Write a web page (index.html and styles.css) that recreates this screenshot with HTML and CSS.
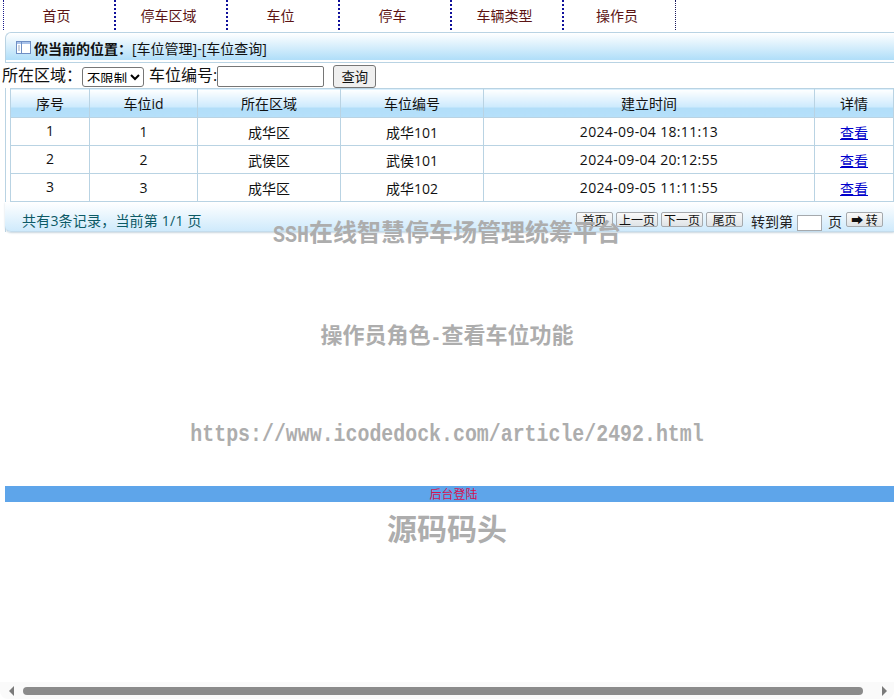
FILE: index.html
```html
<!DOCTYPE html>
<html lang="zh-CN">
<head>
<meta charset="utf-8">
<title>车位查询</title>
<link rel="stylesheet" href="styles.css">
</head>
<body>
<nav class="nav">
  <a class="nav-item">首页</a>
  <a class="nav-item">停车区域</a>
  <a class="nav-item">车位</a>
  <a class="nav-item">停车</a>
  <a class="nav-item">车辆类型</a>
  <a class="nav-item nav-last">操作员</a>
</nav>
<header class="crumb">
  <svg class="crumb-icon" width="15" height="13" viewBox="0 0 15 13"><rect x="0.5" y="0.5" width="14" height="12" fill="#fff" stroke="#6f8fc4"/><rect x="1" y="1" width="13" height="2" fill="#a9c3ea"/><path d="M5.5 1v11" stroke="#6f8fc4"/><path d="M2 5h2M2 7h2M2 9h2" stroke="#9aa9c0"/></svg>
  <b class="crumb-title">你当前的位置：</b><span>[车位管理]-[车位查询]</span>
</header>
<form class="filter">
  <label class="filter-label">所在区域：</label>
  <select class="filter-select"><option>不限制</option></select>
  <label class="filter-label code-label">车位编号:</label>
  <input class="filter-input" type="text">
  <button class="filter-btn" type="button">查询</button>
</form>
<section class="list">
  <table class="grid">
    <colgroup><col class="c1"><col class="c2"><col class="c3"><col class="c4"><col class="c5"><col class="c6"></colgroup>
    <thead>
      <tr><th>序号</th><th>车位id</th><th>所在区域</th><th>车位编号</th><th>建立时间</th><th>详情</th></tr>
    </thead>
    <tbody>
      <tr><td><span class="num">1</span></td><td>1</td><td>成华区</td><td>成华101</td><td class="time">2024-09-04 18:11:13</td><td><a href="#">查看</a></td></tr>
      <tr><td><span class="num">2</span></td><td>2</td><td>武侯区</td><td>武侯101</td><td class="time">2024-09-04 20:12:55</td><td><a href="#">查看</a></td></tr>
      <tr><td><span class="num">3</span></td><td>3</td><td>成华区</td><td>成华102</td><td class="time">2024-09-05 11:11:55</td><td><a href="#">查看</a></td></tr>
    </tbody>
  </table>
  <footer class="pager">
    <span class="pager-info">共有3条记录，当前第 1/1 页</span>
    <span class="pager-btns">
      <button class="pg" type="button">首页</button>
      <button class="pg wide" type="button">上一页</button>
      <button class="pg wide" type="button">下一页</button>
      <button class="pg" type="button">尾页</button>
    </span>
    <span class="goto">转到第</span>
    <input class="pg-input" type="text">
    <span class="goto-end">页</span>
    <button class="pg go" type="button">➡ 转</button>
  </footer>
</section>
<div class="band"><a class="band-link">后台登陆</a></div>

<div class="mark mark1"><span class="lat">SSH</span>在线智慧停车场管理统筹平台</div>
<div class="mark mark2">操作员角色<span class="lat">-</span>查看车位功能</div>
<div class="mark mark3"><span class="lat">https://www.icodedock.com/article/2492.html</span></div>
<div class="mark mark4">源码码头</div>

<div class="hscroll">
  <span class="arrow arrow-l"></span>
  <span class="thumb"></span>
  <span class="arrow arrow-r"></span>
</div>
</body>
</html>
```
FILE: styles.css
```css
* { box-sizing: border-box; }
html, body { margin: 0; height: 699px; overflow: hidden; background: #fff; }
body {
  position: relative;
  width: 894px;
  font-family: "Open Sans", "Noto Sans CJK SC", sans-serif;
  font-size: 14px;
  color: #111;
}

.nav {
  display: flex;
  height: 30px;
  margin-left: 3px;
  border-left: 1px dotted #1a1a8c;
}
.nav-item {
  width: 112px;
  padding-right: 5px;
  line-height: 31px;
  text-align: center;
  font-size: 14px;
  color: #5c1414;
  border-right: 2px dotted #10109a;
}
.nav-last { border-right: 1px dotted #1a1a5c; }

.crumb {
  display: flex;
  align-items: center;
  height: 31px;
  margin: 2px 0 0 5px;
  padding: 0 0 0 10px;
  font-size: 14px;
  background: linear-gradient(#fff, #b2dff9 90%);
  border-top: 1px solid #b9d3e3;
  border-left: 1px solid #b9d3e3;
  border-bottom: 1px solid #b9d3e3;
  border-top-left-radius: 6px;
  box-shadow: inset 0 -2px 0 #fff;
}
.crumb-icon { margin-right: 3px; }
.crumb-title { font-size: 14px; color: #111; }

.filter {
  display: flex;
  align-items: center;
  height: 25px;
  padding-left: 2px;
  font-size: 16px;
}
.filter-label { white-space: nowrap; line-height: 27px; }
.filter-select {
  width: 62px;
  height: 20px;
  margin-top: 2px;
  padding: 0 0 3px;
  font: 13.33px/14px "Noto Sans CJK SC", sans-serif;
  background: #fff;
  border: 1px solid #767676;
  border-radius: 3px;
}
.code-label { margin-left: 5px; }
.filter-input {
  width: 107px;
  height: 21px;
  margin-top: 2px;
  padding: 0 2px;
  background: #fff;
  border: 1px solid #767676;
  border-radius: 2px;
}
.filter-btn {
  width: 43px;
  height: 23px;
  margin: 1px 0 0 9px;
  padding: 0;
  font: 13.33px "Noto Sans CJK SC", sans-serif;
  color: #111;
  background: #efefef;
  border: 1px solid #767676;
  border-radius: 3px;
}

.list {
  margin-left: 5px;
  padding-left: 5px;
  border-left: 1px solid #b9d3e3;
}
.grid {
  width: 883px;
  table-layout: fixed;
  border-collapse: collapse;
  margin-left: -1px;
}
.c1 { width: 79px; }
.c2 { width: 108px; }
.c3 { width: 143px; }
.c4 { width: 143px; }
.c5 { width: 331px; }
.c6 { width: 79px; }
.grid th, .grid td {
  border: 1px solid #b9d3e3;
  text-align: center;
  padding: 0;
}
.grid th {
  height: 29px;
  font-weight: 400;
  font-size: 14px;
  background: linear-gradient(#fff 0, #cbe9fd 65%, #b2def9 66%, #b6e0fa 100%);
}
.grid td { height: 28px; font-size: 14px; background: #fff; }
.grid .time { letter-spacing: 0.33px; }
.num { position: relative; top: -1px; }
.grid a { color: #0000cc; text-decoration: underline; }

.pager {
  display: flex;
  align-items: flex-start;
  height: 30px;
  margin-left: -6px;
  padding-left: 17px;
  background: linear-gradient(#fff, #cfeafc);
  border-bottom: 1px solid #c4dcec;
  border-bottom-left-radius: 6px;
  box-shadow: 0 1px 2px #c9d6de;
  color: #0c5a66;
}
.pager-info { width: 554px; margin-top: 9px; font-size: 14px; line-height: 20px; white-space: nowrap; letter-spacing: 0.2px; }
.pager-btns { display: flex; gap: 3px; margin-top: 10px; }
.pg {
  width: 37px;
  height: 15px;
  padding: 0;
  font: 12px/13px "Noto Sans CJK SC", sans-serif;
  color: #111;
  background: linear-gradient(#fafafa, #dfe3e6);
  border: 1px solid #a5a9ad;
  border-radius: 2px;
}
.wide { width: 42px; }
.goto { margin: 10px 0 0 8px; width: 46px; font-size: 14px; line-height: 20px; color: #222; white-space: nowrap; }
.pg-input { width: 25px; height: 16px; margin-top: 13px; padding: 0; border: 1px solid #a5a9ad; background: #fff; }
.goto-end { margin: 10px 0 0 6px; width: 18px; font-size: 14px; line-height: 20px; color: #222; }
.go { width: 37px; margin-top: 10px; font-size: 12px; }

.band {
  height: 16px;
  margin: 254px 0 0 5px;
  padding-left: 8px;
  background: #5ea5ea;
  text-align: center;
  font-size: 12px;
  line-height: 17px;
  color: #d41252;
}

.mark {
  position: absolute;
  left: 0;
  width: 894px;
  text-align: center;
  font-weight: 700;
  font-family: "Noto Sans CJK SC", sans-serif;
  font-size: 24px;
  line-height: 30px;
  color: #adadad;
  pointer-events: none;
}
.lat {
  display: inline-block;
  font-family: "Liberation Mono", monospace;
  font-size: 20px;
  transform: scaleY(1.2);
}
.mark1 { top: 216px; }
.mark2 { top: 318px; font-size: 22px; }
.mark2 .lat { font-size: 18px; }
.mark3 { top: 415px; }
.mark3 .lat { font-size: 19.9px; }
.mark4 { top: 510px; font-size: 30px; line-height: 34px; }

.hscroll {
  position: absolute;
  left: 0;
  bottom: 0;
  width: 894px;
  height: 17px;
  background: #fafafa;
  border-bottom-left-radius: 8px;
  border-bottom-right-radius: 8px;
}
.thumb {
  position: absolute;
  left: 23px;
  top: 5px;
  width: 840px;
  height: 8px;
  background: #8b8b8b;
  border-radius: 4px;
}
.arrow {
  position: absolute;
  top: 4px;
  width: 0;
  height: 0;
  border-top: 5px solid transparent;
  border-bottom: 5px solid transparent;
}
.arrow-l { left: 9px; border-right: 5px solid #7a7a7a; }
.arrow-r { right: 7px; border-left: 5px solid #7a7a7a; }
```
